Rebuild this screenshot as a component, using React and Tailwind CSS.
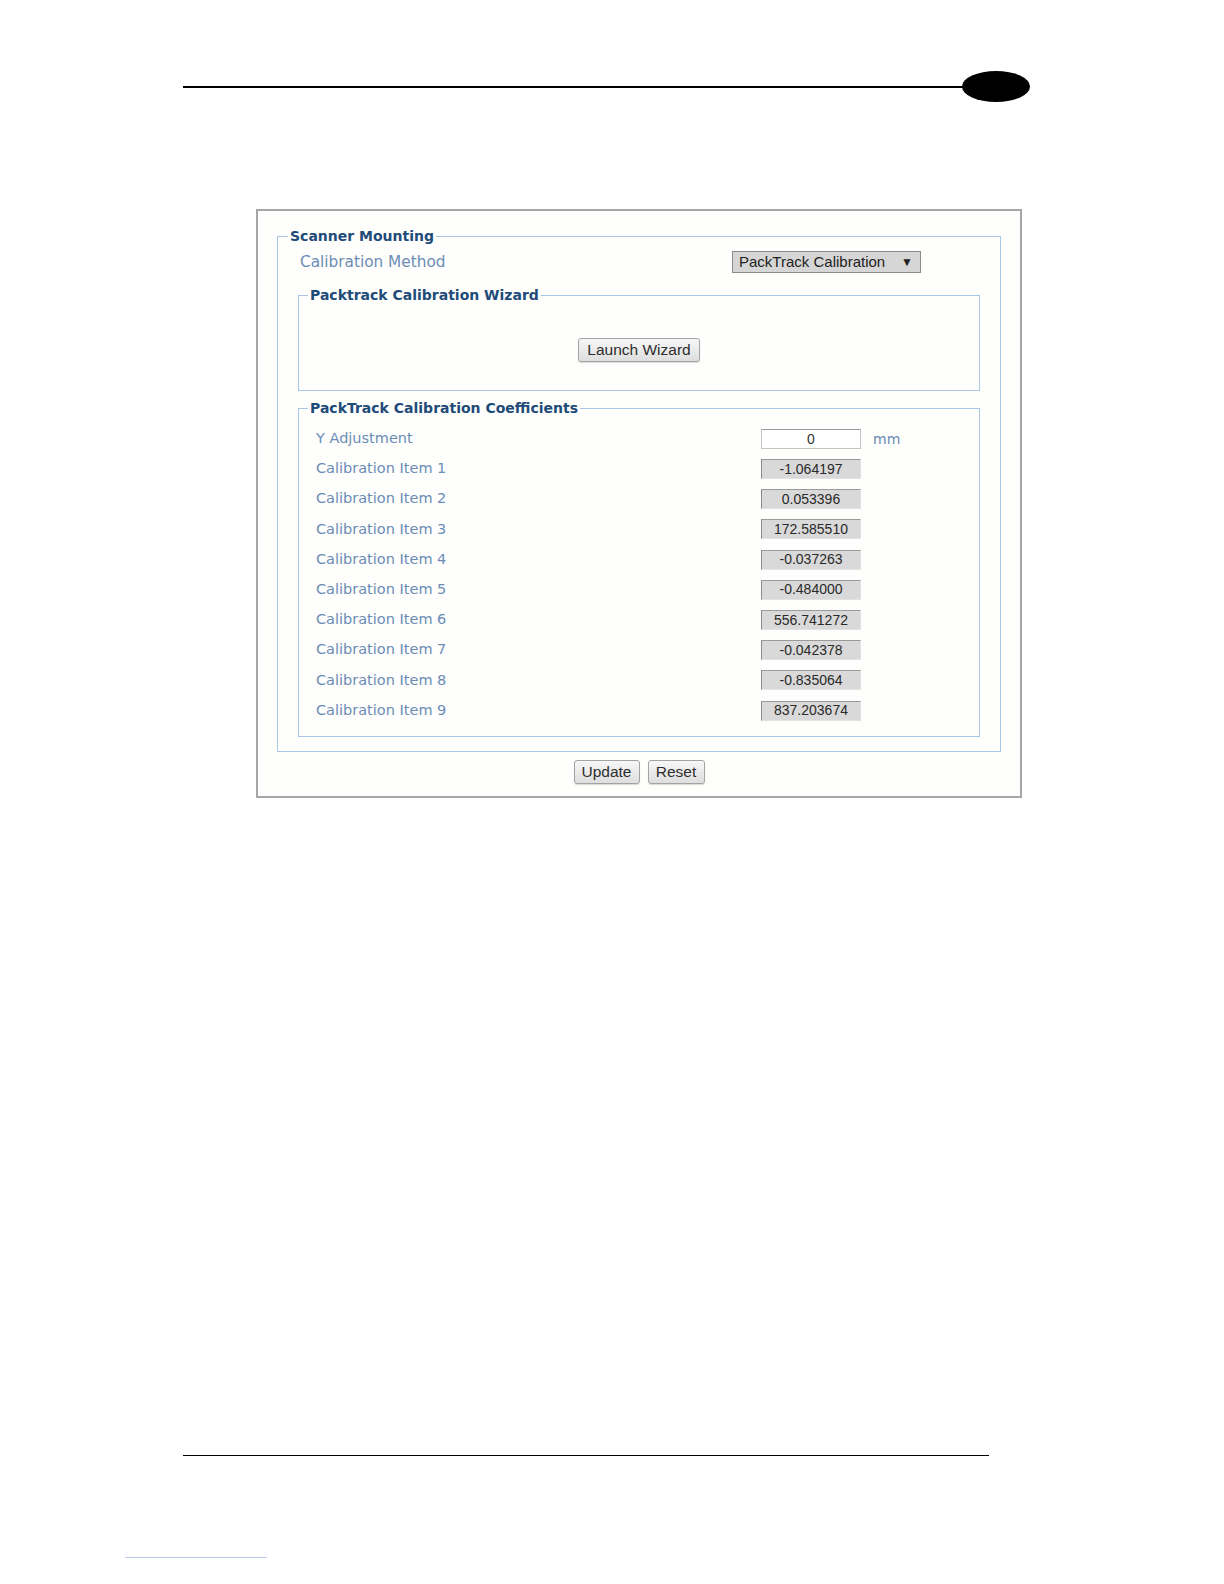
const coefficients = [
  { label: 'Calibration Item 1', value: '-1.064197' },
  { label: 'Calibration Item 2', value: '0.053396' },
  { label: 'Calibration Item 3', value: '172.585510' },
  { label: 'Calibration Item 4', value: '-0.037263' },
  { label: 'Calibration Item 5', value: '-0.484000' },
  { label: 'Calibration Item 6', value: '556.741272' },
  { label: 'Calibration Item 7', value: '-0.042378' },
  { label: 'Calibration Item 8', value: '-0.835064' },
  { label: 'Calibration Item 9', value: '837.203674' }
];

const verdana = { fontFamily: '"DejaVu Sans", Verdana, sans-serif' };
const arial = { fontFamily: '"Liberation Sans", Arial, sans-serif' };

function Button({ children, className = '' }) {
  return (
    <button
      style={arial}
      className={`h-[24px] border border-[#a3a3a3] rounded-[3px] bg-gradient-to-b from-[#f7f7f7] to-[#dedede] text-[15.5px] leading-none text-[#2e2e2e] shadow-[0_1px_1px_rgba(0,0,0,0.15)] ${className}`}
    >
      {children}
    </button>
  );
}

function Legend({ children, indent }) {
  return (
    <legend style={verdana} className={`${indent} px-[2px] text-[14px] leading-[18px] font-bold text-[#1f4b79]`}>
      {children}
    </legend>
  );
}

export default function App() {
  return (
    <div className="w-full h-[1560px] overflow-hidden bg-white flex flex-col">
      {/* header rule with tab */}
      <div className="mt-[71px] ml-[183px] w-[847px] flex items-center">
        <div className="flex-1 h-[2px] bg-black" />
        <div className="-ml-[3px] w-[68px] h-[31px] rounded-[50%] bg-black" />
      </div>

      {/* settings panel */}
      <div className="mt-[107px] ml-[256px] w-[766px] border-2 border-[#a6a6a6] bg-[#fefefc] pt-[16px] pb-[12px] px-[19px]">
        <fieldset className="border border-[#a9c6e4]">
          <Legend indent="ml-[10px]">Scanner Mounting</Legend>

          <div className="px-[20px] pb-[14px]">
            <div className="mt-[6px] h-[22px] flex items-center">
              <span style={verdana} className="w-[434px] pl-[2px] text-[15.3px] text-[#6b8db5]">
                Calibration Method
              </span>
              <div
                style={arial}
                className="w-[189px] h-[22px] border border-[#8c8c8c] bg-[#d6d6d6] flex items-center justify-between pl-[6px] pr-[7px] text-[15px] text-[#222]"
              >
                <span>PackTrack Calibration</span>
                <span className="text-[12px]">▼</span>
              </div>
            </div>

            <fieldset className="mt-[13px] border border-[#a9c6e4]">
              <Legend indent="ml-[9px]">Packtrack Calibration Wizard</Legend>
              <div className="mt-[34px] pb-[28px] flex justify-center">
                <Button className="w-[122px] h-[23px]">Launch Wizard</Button>
              </div>
            </fieldset>

            <fieldset className="mt-[8px] border border-[#a9c6e4]">
              <Legend indent="ml-[9px]">PackTrack Calibration Coefficients</Legend>

              <div className="pl-[17px] pt-[7px] pb-[10px]">
                <div className="h-[30px] flex items-center">
                  <span style={verdana} className="w-[445px] text-[14.5px] text-[#6b8db5]">
                    Y Adjustment
                  </span>
                  <div
                    style={arial}
                    className="w-[100px] h-[20px] border border-[#c4c4c4] border-t-[#9a9a9a] bg-white flex items-center justify-center text-[14px] text-[#333]"
                  >
                    0
                  </div>
                  <span style={verdana} className="ml-[12px] text-[14px] text-[#6b8db5]">
                    mm
                  </span>
                </div>

                {coefficients.map((c) => (
                  <div key={c.label} className="h-[30.2px] flex items-center">
                    <span style={verdana} className="w-[445px] text-[14.5px] text-[#6b8db5]">
                      {c.label}
                    </span>
                    <div
                      style={arial}
                      className="w-[100px] h-[20px] border border-[#e2e2e2] border-t-[#9a9a9a] border-l-[#8a8a8a] bg-[#d9d9d9] flex items-center justify-center text-[14px] text-[#2a2a2a]"
                    >
                      {c.value}
                    </div>
                  </div>
                ))}
              </div>
            </fieldset>
          </div>
        </fieldset>

        <div className="mt-[8px] flex justify-center gap-[8px]">
          <Button className="w-[66px]">Update</Button>
          <Button className="w-[57px]">Reset</Button>
        </div>
      </div>

      {/* footer rule */}
      <div className="mt-[657px] ml-[183px] w-[806px] h-[1.5px] bg-black" />
      <div className="mt-[101px] ml-[125px] w-[142px] h-px bg-[#b9cbe8]" />
    </div>
  );
}
